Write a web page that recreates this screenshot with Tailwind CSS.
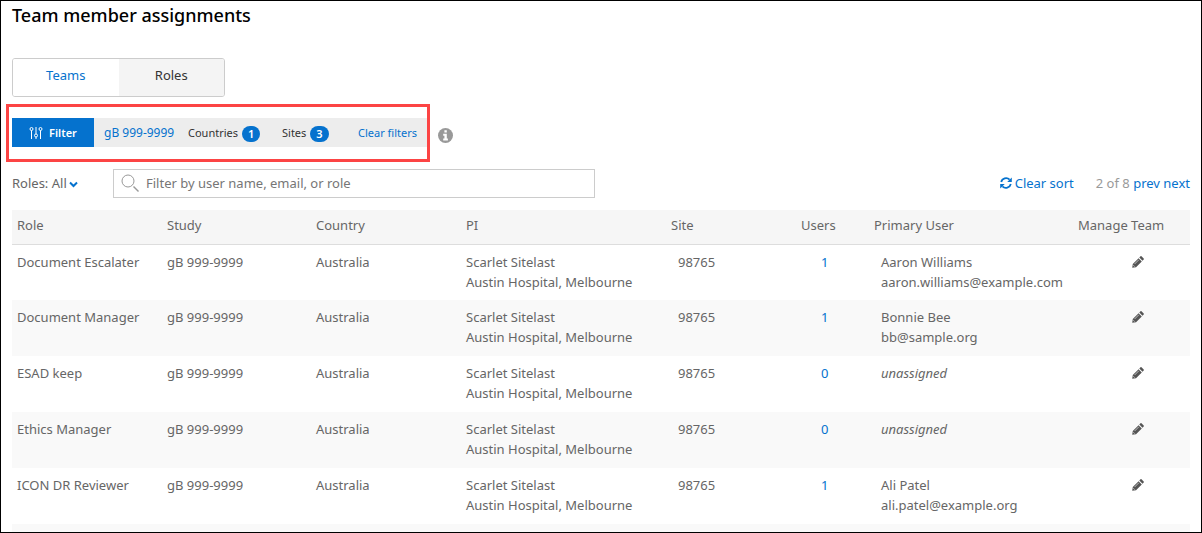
<!DOCTYPE html>
<html lang="en">

<head>
    <meta charset="UTF-8">
    <meta name="viewport" content="width=device-width, initial-scale=1.0">
    <title>Team member assignments</title>
    <script src="https://cdn.jsdelivr.net/npm/@tailwindcss/browser@4"></script>
</head>

<body class="h-screen overflow-hidden border border-black bg-white px-[11px] font-['Noto_Sans',sans-serif] text-[13px] leading-5 text-[#666]">
    <svg class="hidden">
        <symbol id="pencil" viewBox="0 0 12 12">
            <path d="M0.2 11.8 L0.8 8 L6.6 2.2 L9.8 5.4 L4 11.2 Z M7.3 1.5 L8.5 0.3 Q9 -0.1 9.5 0.3 L11.7 2.5 Q12.1 3 11.7 3.5 L10.5 4.7 Z" fill="#555" />
            <path d="M2.6 8 L6.8 3.8 M1.3 9.2 L2.8 10.7" stroke="#fff" stroke-width="0.6" />
        </symbol>
    </svg>

    <h1 class="text-[18px] leading-7 font-medium text-black">Team member assignments</h1>

    <!-- Tabs -->
    <div class="mt-[29px] flex h-[39px] w-[213px] overflow-hidden rounded-[3px] border border-[#ccc]">
        <button class="flex-1 bg-white pb-1.5 text-[#0572ce]">Teams</button>
        <button class="flex-1 bg-[#f4f4f4] pb-1.5 text-[#333]">Roles</button>
    </div>

    <!-- Filter bar -->
    <div class="mt-[7px] -ml-1.5 flex items-center">
        <div class="border-3 border-[#fc4444] pt-[11px] pb-3 pl-[3px]">
            <div class="flex h-[29px] items-center bg-[#ededed] text-[11px] text-[#333]">
                <button class="flex h-full w-[82px] items-center justify-center gap-1.5 bg-[#0572ce] font-semibold text-white">
                    <svg class="h-3.5 w-3.5" viewBox="0 0 14 14" fill="none" stroke="#fff">
                        <circle cx="2.5" cy="3" r="1.5" />
                        <circle cx="7" cy="9.5" r="1.5" />
                        <circle cx="11.5" cy="3" r="1.5" />
                        <path d="M2.5 4.5V13M7 1V8M7 11V13M11.5 4.5V13" />
                    </svg>
                    Filter
                </button>
                <a href="#" class="ml-2.5 w-[84px] text-[12px] text-[#0572ce]">gB 999-9999</a>
                <span class="flex w-[94px] items-center gap-1">Countries <span class="mt-0.5 rounded-full bg-[#0572ce] px-1.5 leading-4 font-semibold text-white">1</span></span>
                <span class="flex w-[76px] items-center gap-1">Sites <span class="mt-0.5 rounded-full bg-[#0572ce] px-1.5 leading-4 font-semibold text-white">3</span></span>
                <a href="#" class="w-[69px] whitespace-nowrap text-[#0572ce]">Clear filters</a>
            </div>
        </div>
        <svg class="mt-1 ml-2 h-[15px] w-[15px]" viewBox="0 0 15 15">
            <circle cx="7.5" cy="7.5" r="7.5" fill="#999" />
            <path d="M6.4 2.3h2.4v2.2H6.4zM5.2 5.8h3.6v4.7h1.1v1.9H5.2v-1.9h1.2V7.7H5.2z" fill="#fff" />
        </svg>
    </div>

    <!-- Search and paging -->
    <div class="mt-[7px] flex items-center *:pb-0.5">
        <button class="flex w-[101px] items-center gap-0.5">
            Roles: All
            <svg class="mt-1 h-[7px] w-[9px]" viewBox="0 0 9 7" fill="none" stroke="#0572ce" stroke-width="2">
                <path d="M1 1.5 L4.5 5 L8 1.5" />
            </svg>
        </button>
        <div class="relative h-[29px] w-[482px]">
            <svg class="absolute top-[5px] left-2 h-[18px] w-[18px]" viewBox="0 0 18 18" fill="none" stroke="#999">
                <circle cx="7" cy="7" r="6" />
                <path d="M12.5 12.5 L17.5 17.5" stroke-width="1.4" />
            </svg>
            <input type="text" aria-label="Filter users" placeholder="Filter by user name, email, or role" class="h-[29px] w-full border border-[#ccc] pb-0.5 pl-8 text-[13px] placeholder:text-[#767676]">
        </div>
        <a href="#" class="ml-auto flex items-center gap-[3px] text-[#0572ce]">
            <svg class="h-3 w-3" viewBox="0 0 12 12">
                <path d="M1.2 5 A5 5 0 0 1 9.6 2.6 M10.8 7 A5 5 0 0 1 2.4 9.4" fill="none" stroke="#0572ce" stroke-width="1.8" />
                <path d="M11.8 0.4V5H7.2zM0.2 11.6V7H4.8z" fill="#0572ce" />
            </svg>
            Clear sort
        </a>
        <div class="ml-[22px] text-[#999]">2 of 8 <a href="#" class="text-[#0572ce]">prev</a> <a href="#" class="text-[#0572ce]">next</a></div>
    </div>

    <!-- Assignments -->
    <table class="mt-3 w-full table-fixed text-left">
        <colgroup>
            <col class="w-[150px]">
            <col class="w-[149px]">
            <col class="w-[150px]">
            <col class="w-[205px]">
            <col class="w-[130px]">
            <col class="w-[73px]">
            <col class="w-[204px]">
            <col class="w-[117px]">
        </colgroup>
        <thead class="border-b border-[#ddd] bg-[#f6f6f6]">
            <tr class="h-[34px] *:px-[5px] *:pb-[3px] *:font-normal *:whitespace-nowrap">
                <th>Role</th>
                <th>Study</th>
                <th>Country</th>
                <th>PI</th>
                <th>Site</th>
                <th>Users</th>
                <th>Primary User</th>
                <th>Manage Team</th>
            </tr>
        </thead>
        <tbody id="rows"></tbody>
    </table>

    <script>
        const people = [
            ['Document Escalater', 1, 'Aaron Williams', 'aaron.williams@example.com'],
            ['Document Manager', 1, 'Bonnie Bee', 'bb@sample.org'],
            ['ESAD keep', 0],
            ['Ethics Manager', 0],
            ['ICON DR Reviewer', 1, 'Ali Patel', 'ali.patel@example.org'],
        ];

        const rows = people.map(([role, users, name, email]) => `
            <tr class="h-14 align-top even:bg-[#f9f9f9] *:px-[5px] *:pt-[7px] *:whitespace-nowrap">
                <td>${role}</td>
                <td>gB 999-9999</td>
                <td>Australia</td>
                <td>Scarlet Sitelast<br>Austin Hospital, Melbourne</td>
                <td><span class="ml-[7px]">98765</span></td>
                <td><a href="#" class="ml-5 text-[#0572ce]">${users}</a></td>
                <td><div class="ml-[7px]">${name ? `${name}<br>${email}` : '<i>unassigned</i>'}</div></td>
                <td><button aria-label="Edit ${role}" class="ml-[54px] pt-1"><svg class="h-3 w-3"><use href="#pencil" /></svg></button></td>
            </tr>`);

        // next row starts at the bottom edge
        rows.push('<tr class="h-2 bg-[#f9f9f9]"><td colspan="8"></td></tr>');
        document.getElementById('rows').innerHTML = rows.join('');
    </script>
</body>

</html>
